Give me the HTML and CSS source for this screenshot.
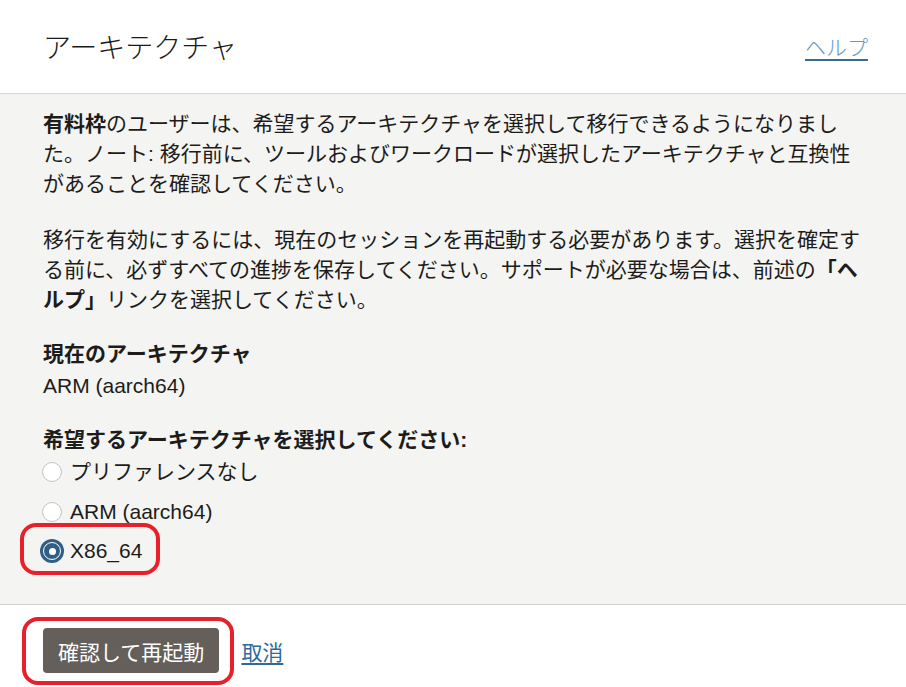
FILE: index.html
```html
<!DOCTYPE html>
<html lang="ja">
<head>
<meta charset="utf-8">
<title>アーキテクチャ</title>
<link rel="stylesheet" href="styles.css">
</head>
<body>
<div class="dialog">
  <header class="head">
    <h1 class="title">アーキテクチャ</h1>
    <a class="help" href="#">ヘルプ</a>
  </header>
  <main class="body">
    <p class="para"><b>有料枠</b>のユーザーは、希望するアーキテクチャを選択して移行できるようになりました。ノート: 移行前に、ツールおよびワークロードが選択したアーキテクチャと互換性があることを確認してください。</p>
    <p class="para last">移行を有効にするには、現在のセッションを再起動する必要があります。選択を確定する前に、必ずすべての進捗を保存してください。サポートが必要な場合は、前述の<b>「ヘルプ」</b>リンクを選択してください。</p>
    <div class="field">
      <div class="label">現在のアーキテクチャ</div>
      <div class="value">ARM (aarch64)</div>
    </div>
    <div class="field">
      <div class="label">希望するアーキテクチャを選択してください:</div>
      <div class="radios">
        <label class="radio"><span class="dot"></span>プリファレンスなし</label>
        <label class="radio"><span class="dot"></span>ARM (aarch64)</label>
        <label class="radio checked"><span class="dot"></span>X86_64<span class="mark mark-radio"></span></label>
      </div>
    </div>
  </main>
  <footer class="foot">
    <button class="btn">確認して再起動<span class="mark mark-btn"></span></button>
    <a class="cancel" href="#">取消</a>
  </footer>
</div>
</body>
</html>
```
FILE: styles.css
```css
html, body {
  margin: 0;
  padding: 0;
}
body {
  width: 906px;
  height: 687px;
  overflow: hidden;
  background: #ffffff;
  font-family: "Liberation Sans", "Noto Sans CJK JP", sans-serif;
  color: #1d1c1a;
}
.dialog {
  display: flex;
  flex-direction: column;
  height: 687px;
}
.head {
  height: 93px;
  display: flex;
  align-items: center;
  justify-content: space-between;
  padding: 0 38px 0 43px;
  border-bottom: 1px solid #d8d8d6;
  background: #fff;
  flex: none;
}
.title {
  margin: 0;
  font-size: 28px;
  font-weight: 300;
  color: #1a1a1a;
  padding-bottom: 2px;
}
.help {
  font-size: 21px;
  font-weight: 300;
  color: #6b97bd;
  text-decoration: underline;
  text-decoration-color: #3b6a93;
  text-decoration-thickness: 2px;
  text-underline-offset: 4px;
  margin-bottom: 2px;
}
.body {
  flex: none;
  height: 511px;
  background: #f4f4f2;
  padding: 15px 40px 0 43px;
  box-sizing: border-box;
  border-bottom: 1px solid #cfcfcd;
  font-size: 21px;
  line-height: 30px;
}
.para {
  margin: 0 0 26px 0;
}
.para.last {
  margin-bottom: 23px;
}
.para b {
  font-weight: 700;
}
.field {
  margin-bottom: 22px;
}
.label {
  font-weight: 700;
  line-height: 32px;
}
.value {
  line-height: 32px;
}
.radios {
  display: flex;
  flex-direction: column;
  gap: 7.5px;
}
.radio {
  position: relative;
  display: flex;
  align-items: center;
  height: 32px;
  gap: 8px;
  margin-left: -1px;
}
.dot {
  width: 20px;
  height: 20px;
  border-radius: 50%;
  border: 1px solid #c4c4c2;
  background: #fff;
  box-sizing: border-box;
  flex: none;
  position: relative;
}
.checked {
  gap: 6px;
}
.checked .dot {
  width: 24px;
  height: 24px;
  margin-left: -2px;
  border: none;
  background: #2f5f86;
}
.checked .dot::before {
  content: "";
  position: absolute;
  inset: 3px;
  border-radius: 50%;
  border: 1.5px solid #fff;
}
.checked .dot::after {
  content: "";
  position: absolute;
  left: 8.5px;
  top: 8.5px;
  width: 7px;
  height: 7px;
  border-radius: 50%;
  background: #fff;
}
.foot {
  flex: 1;
  display: flex;
  align-items: center;
  gap: 22px;
  padding: 9px 0 0 43px;
  background: #fff;
}
.btn {
  position: relative;
  height: 45px;
  padding: 0 15px;
  border: none;
  border-radius: 4px;
  background: #645f5b;
  color: #fff;
  font-family: "Liberation Sans", "Noto Sans CJK JP", sans-serif;
  font-size: 21px;
  cursor: pointer;
}
.cancel {
  font-size: 21px;
  color: #2e6a9a;
  text-decoration: underline;
  text-underline-offset: 3px;
}
.mark {
  position: absolute;
  border: 4px solid #e8202b;
  border-radius: 16px;
  pointer-events: none;
}
.mark-radio {
  left: -22px;
  top: -12px;
  width: 132px;
  height: 44px;
}
.mark-btn {
  left: -21px;
  top: -11px;
  width: 204px;
  height: 60px;
}
```
